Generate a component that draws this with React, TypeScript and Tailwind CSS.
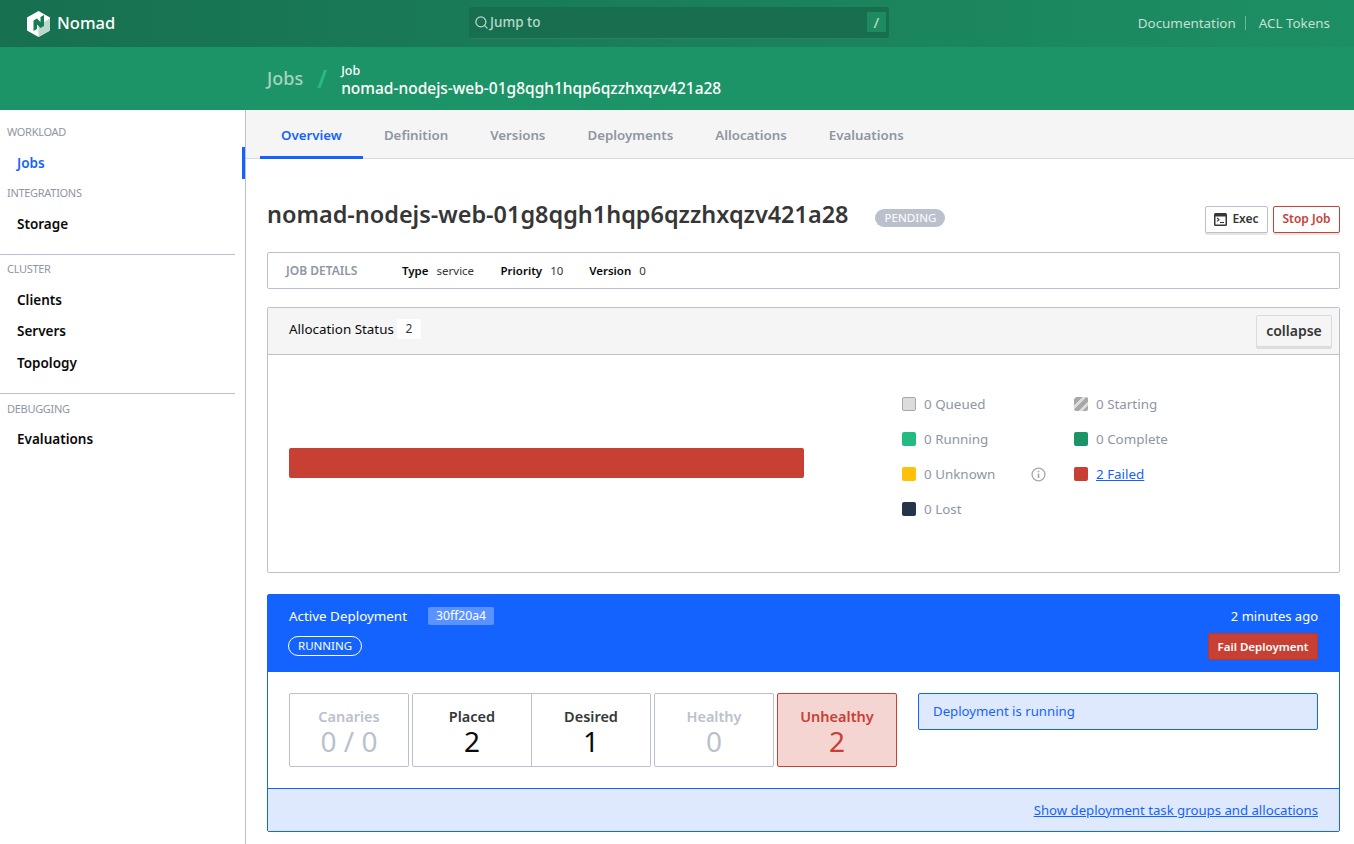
import { Search } from "lucide-react";

const font = { fontFamily: '"Noto Sans", sans-serif' };

const tabs = ["Overview", "Definition", "Versions", "Deployments", "Allocations", "Evaluations"];

function NomadLogo() {
  return (
    <svg width="23" height="26" viewBox="0 0 23 26" className="shrink-0">
      <path d="M11.5 0 23 6.5v13L11.5 26 0 19.5v-13z" fill="#fff" />
      <path d="M14 13 23 7.5v12L11.5 26V15z" fill="#b9d8cb" />
      <path d="M6.5 20V9.5l3.5-2 3.5 3.5V6l3.5-2v11l-3.5 2-3.5-3.5V18z" fill="#1a7a55" />
    </svg>
  );
}

function SideLabel({ children }: { children: string }) {
  return <div className="pl-[7px] text-[11px] tracking-[-0.3px] leading-[16px] text-[#8e96a3]">{children}</div>;
}

function SideItem({ children, active }: { children: string; active?: boolean }) {
  return (
    <div
      className={`h-[31.5px] flex items-center pl-[17px] text-[13.5px] font-semibold ${
        active ? "text-[#1563ff] border-r-[3px] border-[#1563ff]" : "text-[#0a0a0a]"
      }`}
    >
      {children}
    </div>
  );
}

function Legend({ color, label, striped }: { color: string; label: string; striped?: boolean }) {
  return (
    <div className="flex items-center gap-[8px] text-[13.4px] text-[#8e96a3] h-[20px]">
      <span
        className={`w-[14px] h-[14px] shrink-0 rounded-[2px] ${color}`}
        style={
          striped
            ? { background: "repeating-linear-gradient(-45deg,#a8a8a8 0 4px,#dcdcdc 4px 7px)" }
            : undefined
        }
      />
      {label}
    </div>
  );
}

function Stat({ label, value, tone }: { label: string; value: string; tone: "muted" | "dark" | "red" }) {
  const labelColor = tone === "muted" ? "text-[#bac1cc]" : tone === "red" ? "text-[#c84034]" : "text-[#363636]";
  const valueColor = tone === "muted" ? "text-[#bac1cc]" : tone === "red" ? "text-[#c84034]" : "text-[#0a0a0a]";
  return (
    <div className="flex-1 flex flex-col items-center pt-[12px]">
      <div className={`text-[14.5px] leading-[20px] font-semibold ${labelColor}`}>{label}</div>
      <div className={`text-[28px] leading-[30px] ${valueColor}`}>{value}</div>
    </div>
  );
}

export default function App() {
  return (
    <div className="min-h-[844px] bg-white text-[#363636]" style={font}>
      {/* top nav */}
      <div className="h-[47px] flex items-center bg-gradient-to-r from-[#177050] to-[#1d8f64] pl-[27px] pr-[24px]">
        <div className="w-[442px] flex items-center gap-[7px]">
          <NomadLogo />
          <span className="text-white text-[16.5px] font-medium">Nomad</span>
        </div>
        <div className="w-[420px] h-[32px] mb-[2px] rounded-[3px] bg-[#186f50] border-b-[1px] border-[#2f7f64] flex items-center pl-[5px] pr-[3px] text-[13.5px] font-medium text-[#b9d8cb]">
          <Search size={15} strokeWidth={2} />
          <span className="ml-[1px] flex-1">Jump to</span>
          <span className="w-[19px] h-[20px] flex items-center justify-center bg-[#1d8a60] text-[15px]">/</span>
        </div>
        <div className="ml-auto flex items-center text-[13.4px] text-[#c5e0d4]">
          <span className="pr-[9px]">Documentation</span>
          <span className="pl-[13px] border-l border-[#6fb79b] leading-[14px]">ACL Tokens</span>
        </div>
      </div>

      {/* sub header */}
      <div className="h-[63px] bg-[#1d9467] pl-[267px] flex items-center">
        <span className="text-[18px] font-medium text-[#a5d4c0]">Jobs</span>
        <span className="mx-[14px] text-[25px] font-semibold text-[#2cb884]">/</span>
        <div className="flex flex-col text-white mt-[5px]">
          <span className="text-[12.5px] leading-[14px] font-medium">Job</span>
          <span className="text-[15.5px] leading-[20px] font-medium">nomad-nodejs-web-01g8qgh1hqp6qzzhxqzv421a28</span>
        </div>
      </div>

      <div className="flex">
        {/* sidebar */}
        <div className="w-[246px] shrink-0 border-r border-[#bac1cc] min-h-[734px] pt-[14px]">
          <SideLabel>WORKLOAD</SideLabel>
          <div className="mt-[7px]">
            <SideItem active>Jobs</SideItem>
          </div>
          <div className="mt-[6px]">
            <SideLabel>INTEGRATIONS</SideLabel>
          </div>
          <div className="mt-[8px]">
            <SideItem>Storage</SideItem>
          </div>
          <div className="mt-[14px] mr-[10px] border-t border-[#bac1cc] pt-[6px]">
            <SideLabel>CLUSTER</SideLabel>
          </div>
          <div className="mt-[7px]">
            <SideItem>Clients</SideItem>
            <SideItem>Servers</SideItem>
            <SideItem>Topology</SideItem>
          </div>
          <div className="mt-[14px] mr-[10px] border-t border-[#bac1cc] pt-[7px]">
            <SideLabel>DEBUGGING</SideLabel>
          </div>
          <div className="mt-[7px]">
            <SideItem>Evaluations</SideItem>
          </div>
        </div>

        {/* main */}
        <div className="flex-1 min-w-0">
          <div className="h-[49px] bg-[#f5f5f5] border-b border-[#dbdbdb] flex pl-[14px]">
            {tabs.map((t, i) => (
              <div
                key={t}
                className={`h-[49px] px-[21px] flex items-center text-[13.3px] font-semibold ${
                  i === 0 ? "pt-[5px] text-[#1563ff] border-b-[3px] border-[#1563ff]" : "pt-[2px] text-[#8e96a3]"
                }`}
              >
                {t}
              </div>
            ))}
          </div>

          <div className="pl-[21px] pr-[14px] pt-[41px]">
            {/* title */}
            <div className="flex items-center h-[32px]">
              <h1 className="mb-[2px] text-[23.45px] font-semibold text-[#363636]">nomad-nodejs-web-01g8qgh1hqp6qzzhxqzv421a28</h1>
              <span className="ml-[27px] mt-[3px] h-[18px] px-[9px] rounded-full bg-[#bac1cc] text-white text-[11.6px] flex items-center">
                PENDING
              </span>
              <div className="ml-auto flex gap-[5px] mt-[6px]">
                <button className="h-[27px] w-[63px] flex items-center justify-center gap-[5px] bg-white border border-[#bac1cc] rounded-[2px] shadow-[0_2px_0_0_rgba(10,10,10,0.1)] text-[12px] font-semibold">
                  <svg width="13" height="13" viewBox="0 0 13 13">
                    <rect x="0" y="0" width="13" height="13" rx="1.5" fill="#363636" />
                    <rect x="1.5" y="3.5" width="10" height="8" fill="#fff" />
                    <path d="M3 5 5 6.7 3 8.4" fill="none" stroke="#363636" strokeWidth="1.1" />
                    <path d="M6 9.5h4" stroke="#363636" strokeWidth="1.1" />
                  </svg>
                  Exec
                </button>
                <button className="h-[27px] w-[67px] bg-white border border-[#c84034] rounded-[2px] shadow-[0_2px_0_0_rgba(10,10,10,0.1)] text-[12px] font-semibold text-[#c84034]">
                  Stop Job
                </button>
              </div>
            </div>

            {/* job details */}
            <div className="mt-[20px] h-[37px] border border-[#bac1cc] rounded-[2px] flex items-center pl-[18px] text-[11.5px]">
              <span className="w-[116px] text-[12px] font-semibold text-[#8e96a3]">JOB DETAILS</span>
              <span className="font-semibold text-[#0a0a0a]">Type</span>
              <span className="ml-[8px] w-[64px]">service</span>
              <span className="font-semibold text-[#0a0a0a]">Priority</span>
              <span className="ml-[8px] w-[39px]">10</span>
              <span className="font-semibold text-[#0a0a0a]">Version</span>
              <span className="ml-[8px]">0</span>
            </div>

            {/* allocation status */}
            <div className="mt-[18px] h-[266px] border border-[#bac1cc] rounded-[2px]">
              <div className="h-[47px] bg-[#f5f5f5] border-b border-[#bac1cc] flex items-center pl-[21px] pr-[7px] text-[13.4px]">
                <span className="text-[#0a0a0a] mb-[4px]">Allocation Status</span>
                <span className="ml-[3px] mb-[4px] w-[24px] h-[20px] flex items-center justify-center bg-white text-[12px] rounded-[2px]">
                  2
                </span>
                <button className="ml-auto h-[32px] w-[76px] mb-[1px] bg-[#f5f5f5] border border-[#dbdbdb] rounded-[2px] shadow-[0_2px_0_0_rgba(10,10,10,0.1)] text-[14px] font-semibold">
                  collapse
                </button>
              </div>
              <div className="flex pl-[21px] pt-[39px]">
                <div className="w-[515px] h-[30px] mt-[54px] rounded-[2px] bg-[#c84034]" />
                <div className="ml-[98px] grid grid-cols-[172px_1fr] gap-y-[15px]">
                  <Legend color="bg-[#dcdcdc] border border-[#a8a8a8]" label="0 Queued" />
                  <Legend color="" striped label="0 Starting" />
                  <Legend color="bg-[#25ba81]" label="0 Running" />
                  <Legend color="bg-[#1d9467]" label="0 Complete" />
                  <div className="flex items-center justify-between pr-[28px]">
                    <Legend color="bg-[#ffc107]" label="0 Unknown" />
                    <svg width="15" height="15" viewBox="0 0 14 14" fill="none" stroke="#a8a8a8" strokeWidth="1.2">
                      <circle cx="7" cy="7" r="6" />
                      <path d="M7 6.2v4" strokeWidth="1.6" />
                      <path d="M7 3.5v1.4" strokeWidth="1.6" />
                    </svg>
                  </div>
                  <div className="flex items-center gap-[8px] text-[13.4px] h-[20px]">
                    <span className="w-[14px] h-[14px] shrink-0 rounded-[2px] bg-[#c84034]" />
                    <span className="text-[#1563ff] underline">2 Failed</span>
                  </div>
                  <Legend color="bg-[#25344a]" label="0 Lost" />
                </div>
              </div>
            </div>

            {/* active deployment */}
            <div className="mt-[21px] border border-[#1563ff] rounded-[2px]">
              <div className="h-[77px] bg-[#1563ff] text-white px-[21px] pt-[11px] flex justify-between">
                <div>
                  <div className="flex items-center h-[20px] text-[13.4px]">
                    Active Deployment
                    <span className="ml-[21px] h-[18px] px-[8px] flex items-center bg-[#5a92ff] text-[12.2px] rounded-[2px]">
                      30ff20a4
                    </span>
                  </div>
                  <span className="mt-[10px] -ml-px inline-flex items-center h-[20px] px-[9px] rounded-full border border-white text-[11.5px]">
                    RUNNING
                  </span>
                </div>
                <div className="flex flex-col items-end">
                  <div className="text-[13px] leading-[20px]">2 minutes ago</div>
                  <button className="mt-[7px] h-[27px] w-[110px] bg-[#c84034] border border-[#b5392e] rounded-[2px] text-[11.5px] font-semibold">
                    Fail Deployment
                  </button>
                </div>
              </div>
              <div className="h-[116px] px-[21px] pt-[21px] flex">
                <div className="w-[120px] h-[74px] border border-[#bac1cc] rounded-[2px] flex">
                  <Stat label="Canaries" value="0 / 0" tone="muted" />
                </div>
                <div className="ml-[3px] w-[239px] h-[74px] border border-[#bac1cc] rounded-[2px] flex divide-x divide-[#bac1cc]">
                  <Stat label="Placed" value="2" tone="dark" />
                  <Stat label="Desired" value="1" tone="dark" />
                </div>
                <div className="ml-[3px] w-[120px] h-[74px] border border-[#bac1cc] rounded-[2px] flex">
                  <Stat label="Healthy" value="0" tone="muted" />
                </div>
                <div className="ml-[3px] w-[120px] h-[74px] border border-[#c84034] bg-[#f4d5d2] rounded-[2px] flex">
                  <Stat label="Unhealthy" value="2" tone="red" />
                </div>
                <div className="ml-[21px] flex-1 h-[37px] border border-[#1563ff] bg-[#dfe9fd] rounded-[2px] flex items-center pl-[14px] text-[13.2px] text-[#1563ff]">
                  Deployment is running
                </div>
              </div>
              <div className="h-[43px] pt-[2px] bg-[#dfe9fd] border-t border-[#1563ff] flex items-center justify-end pr-[21px] text-[13.2px] text-[#1563ff] underline">
                Show deployment task groups and allocations
              </div>
            </div>
          </div>
        </div>
      </div>
    </div>
  );
}
